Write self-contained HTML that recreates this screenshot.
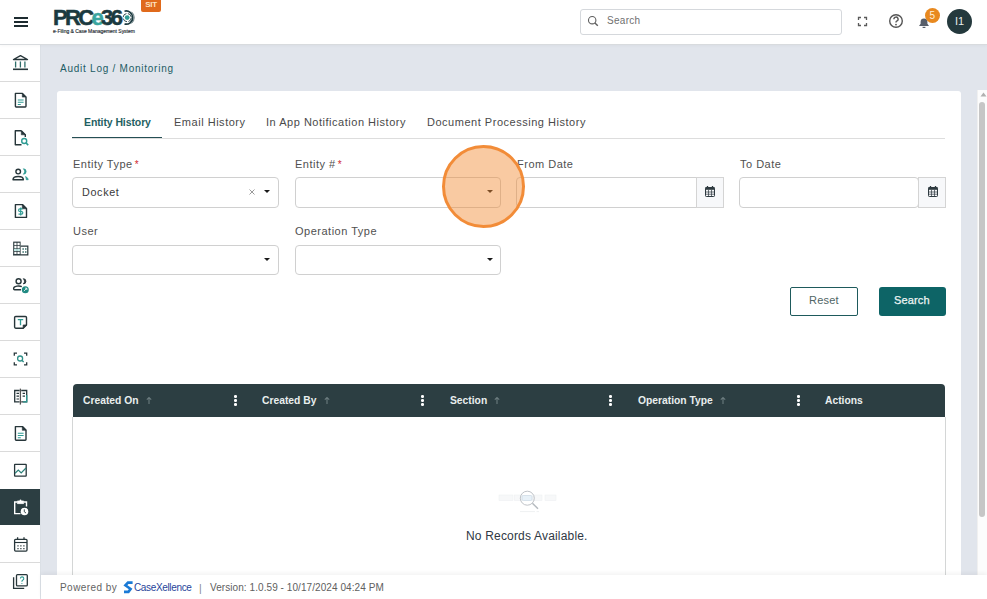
<!DOCTYPE html>
<html><head><meta charset="utf-8">
<style>
*{box-sizing:border-box;margin:0;padding:0}
html,body{width:987px;height:599px;overflow:hidden;background:#e1e5ec;font-family:"Liberation Sans",sans-serif;color:#333}
.abs{position:absolute;white-space:nowrap}
#hdr{position:absolute;left:0;top:0;width:987px;height:45px;background:#fff;border-bottom:1px solid #d8dbde;box-shadow:0 1px 3px rgba(0,0,0,0.035);z-index:2}
#side{position:absolute;left:0;top:45px;width:41px;height:554px;background:#fff;border-right:1px solid #dbe0e6}
.sep{position:absolute;left:0;width:40px;height:1px;background:#dadada}
#card{position:absolute;left:57px;top:91px;width:904px;height:520px;background:#fff;border-radius:3px}
.tab{position:absolute;top:116px;font-size:11px;color:#4a4a4a;letter-spacing:0.52px;line-height:13px}
.lbl{position:absolute;font-size:11px;color:#505050;letter-spacing:0.5px;line-height:13px}
.req{color:#d0282e;margin-left:-1.5px;font-size:10px}
.inp{position:absolute;height:31px;border:1px solid #d0d0d0;border-radius:4px;background:#fff}
.caret{position:absolute;width:0;height:0;border-left:3px solid transparent;border-right:3px solid transparent;border-top:3px solid #1a1a1a}
.cal{position:absolute;width:28px;height:31px;border:1px solid #d4d4d4;background:#f7f8fa}
#thead{position:absolute;left:73px;top:384px;width:872px;height:33px;background:#2c3e42;border-radius:4px 4px 0 0}
.th{position:absolute;top:394px;font-size:10.3px;color:#e9eeee;font-weight:bold;line-height:13px}
.arr{position:absolute;top:395px}
.dots{position:absolute;top:395px;width:2px}
.dots i{display:block;width:2.6px;height:2.6px;background:#fff;border-radius:50%;margin-bottom:1.4px}
#tbody{position:absolute;left:72px;top:417px;width:874px;height:170px;border-left:1px solid #d4d6d6;border-right:1px solid #d4d6d6}
#footer{position:absolute;left:41px;top:575px;width:946px;height:24px;background:#fff;box-shadow:0 -2px 4px rgba(0,0,0,0.05)}
#sbar{position:absolute;left:977px;top:90px;width:10px;height:485px;background:#fcfcfc;border-left:1px solid #f0f0f0}
</style></head><body>
<div id="hdr">
  <!-- hamburger -->
  <div class="abs" style="left:14px;top:17px;width:14px;height:2px;background:#1d2b30"></div>
  <div class="abs" style="left:14px;top:21px;width:14px;height:2px;background:#1d2b30"></div>
  <div class="abs" style="left:14px;top:25px;width:14px;height:2px;background:#1d2b30"></div>
  <!-- logo -->
  <div class="abs" style="left:53px;top:6px;font-size:22px;font-weight:bold;letter-spacing:-2.65px;color:#1b3a40;line-height:24px;-webkit-text-stroke:0.5px #1b3a40">PRC<span style="color:#3aa59f;-webkit-text-stroke:0.5px #3aa59f">e</span>36</div>
  <svg class="abs" style="left:117px;top:7px" width="21" height="21" viewBox="0 0 21 21">
    <circle cx="10.2" cy="10.6" r="2.4" fill="#2f9c94"/>
    <circle cx="10.2" cy="10.6" r="4.1" fill="none" stroke="#1b3a40" stroke-width="0.9" stroke-dasharray="5 1.5"/>
    <path d="M7.5 4.2 A6.6 6.6 0 1 1 7.5 17" fill="none" stroke="#1b3a40" stroke-width="1.7"/>
    <path d="M14.5 4.8 A7.6 7.6 0 0 1 14.5 16.4" fill="none" stroke="#1b3a40" stroke-width="0.7"/>
  </svg>
  <div class="abs" style="left:53px;top:28px;font-size:5px;color:#1f2d32;letter-spacing:-0.03px;line-height:6px;-webkit-text-stroke:0.15px #1f2d32">e-Filing &amp; Case Management System</div>
  <div class="abs" style="left:141px;top:0;width:20px;height:12px;background:#e06a1c;border-radius:0 0 2px 2px;color:#fde3c0;font-size:8px;font-weight:bold;text-align:center;line-height:10px;letter-spacing:-0.3px">SIT</div>
  <!-- search -->
  <div class="abs" style="left:580px;top:9px;width:262px;height:26px;border:1px solid #d5d8dc;border-radius:3px;background:#fff"></div>
  <svg class="abs" style="left:586px;top:14px" width="14" height="14" viewBox="0 0 14 14"><circle cx="6.2" cy="6.2" r="3.7" fill="none" stroke="#5e5e5e" stroke-width="1.1"/><path d="M8.9 8.9 L11.8 11.8" stroke="#5e5e5e" stroke-width="1.4"/></svg>
  <div class="abs" style="left:607px;top:15px;font-size:10px;color:#707070;letter-spacing:0.3px;line-height:12px">Search</div>
  <!-- fullscreen -->
  <svg class="abs" style="left:857px;top:16px" width="11" height="11" viewBox="0 0 11 11" fill="none" stroke="#5a5a5a" stroke-width="1.3">
    <path d="M1.5 4V1.5H4M7 1.5H9.5V4M9.5 7V9.5H7M4 9.5H1.5V7"/>
  </svg>
  <!-- help -->
  <svg class="abs" style="left:888px;top:13px" width="16" height="16" viewBox="0 0 16 16">
    <circle cx="8" cy="8" r="6.3" fill="none" stroke="#555" stroke-width="1.4"/>
    <path d="M5.9 6.3 A2.1 2.1 0 1 1 8.6 8.2 Q8 8.5 8 9.6" fill="none" stroke="#555" stroke-width="1.4"/>
    <circle cx="8" cy="11.6" r="0.9" fill="#555"/>
  </svg>
  <!-- bell -->
  <svg class="abs" style="left:917px;top:15px" width="14" height="14" viewBox="0 0 14 14">
    <path d="M2 11 L3.6 8.8 V6.8 A3.4 3.4 0 0 1 10.4 6.8 V8.8 L12 11 Z" fill="#585f6b"/>
    <path d="M5.6 12.4 H8.4" stroke="#585f6b" stroke-width="1.2"/>
  </svg>
  <div class="abs" style="left:924.5px;top:7.5px;width:15.5px;height:15.5px;border-radius:50%;background:#e8891f;color:#fdf0d8;font-size:10px;text-align:center;line-height:15px">5</div>
  <!-- avatar -->
  <div class="abs" style="left:947px;top:9px;width:25px;height:25px;border-radius:50%;background:#24393d;color:#e8eeee;font-size:11px;text-align:center;line-height:25px">I1</div>
</div>

<div id="side"></div>
<div class="sep" style="top:81px"></div>
<div class="sep" style="top:118px"></div>
<div class="sep" style="top:155px"></div>
<div class="sep" style="top:192px"></div>
<div class="sep" style="top:229px"></div>
<div class="sep" style="top:266px"></div>
<div class="sep" style="top:303px"></div>
<div class="sep" style="top:340px"></div>
<div class="sep" style="top:377px"></div>
<div class="sep" style="top:414px"></div>
<div class="sep" style="top:451px"></div>
<div class="abs" style="left:0;top:489px;width:40px;height:36px;background:#2c3e42"></div>
<div class="sep" style="top:562px"></div>

<svg class="abs" style="left:0;top:0" width="40" height="599" viewBox="0 0 40 599" fill="none" stroke-linecap="butt">
  <g stroke="#27363a" stroke-width="1.4">
    <!-- 0 bank -->
    <path d="M13.5 59.5 L20.5 55.6 L27.5 59.5 Z" stroke-linejoin="round"/>
    <path d="M13 69.3 H28" stroke-width="1.6"/>
    <path d="M15.6 61.5 V67.5 M20.4 61.5 V67.5 M24.9 61.5 V67.5" stroke="#2f6e6a" stroke-width="1.3"/>
    <!-- 1 doc -->
    <path d="M15.4 93.4 H22.5 L26 96.9 V106.3 Q26 107 25.3 107 H16.1 Q15.4 107 15.4 106.3 Z" stroke-linejoin="round"/>
    <path d="M22.3 93.4 L26 97.1 L22.3 97.1 Z" fill="#27363a" stroke-width="0.6"/>
    <path d="M17.8 100 H23.6 M17.8 102.3 H23.6 M17.8 104.5 H20.8" stroke="#2f9c94" stroke-width="1.1"/>
    <!-- 2 doc search -->
    <path d="M21.5 130.8 H15.3 V144.8 H21.5" stroke-linejoin="round"/>
    <path d="M21.3 130.8 L25.3 134.8 V137" />
    <path d="M21.3 130.8 L25.3 134.8 L21.3 134.8 Z" fill="#27363a" stroke-width="0.6"/>
    <circle cx="24.2" cy="141" r="2.5" stroke="#2f9c94" stroke-width="1.4"/>
    <path d="M26 142.9 L28.2 145.1" stroke="#2f9c94" stroke-width="1.5"/>
    <!-- 3 users -->
    <circle cx="18.2" cy="171.6" r="2.3"/>
    <path d="M13 179.7 C13 175.5 23.4 175.5 23.4 179.7 Z" stroke-linejoin="round"/>
    <path d="M23.4 168.8 A2.7 2.7 0 0 1 23.4 174.2 A3.5 3.5 0 0 0 23.4 168.8 Z" fill="#2f9c94" stroke="#2f9c94" stroke-width="0.8"/>
    <path d="M25.6 176.6 Q28.2 177.8 28.2 179.7 H26.3 Q26.3 178 25.6 176.6 Z" fill="#2f9c94" stroke="#2f9c94" stroke-width="0.8"/>
    <!-- 4 $ doc -->
    <path d="M15.4 204.6 H22.5 L26.5 208.6 V217.4 H15.4 Z" stroke-linejoin="round"/>
    <path d="M22.3 204.6 L26.5 208.8 L22.3 208.8 Z" fill="#27363a" stroke-width="0.6"/>
    <path d="M22.6 208.9 H19.7 Q18.6 208.9 18.6 210.3 Q18.6 211.5 19.7 211.5 H21.6 Q22.8 211.5 22.8 212.8 Q22.8 214.1 21.6 214.1 H18.5 M20.7 207.6 V215.4" stroke="#2f9c94" stroke-width="1.2"/>
    <!-- 5 building -->
    <path d="M13.2 254.8 V241.6 H20.6 V254.8 Z" fill="#27363a" stroke="none"/>
    <path d="M20.6 246.2 H27.8 V254.8 H13" stroke-width="1.2"/>
    <path d="M14.3 242.8 h2.3 v2.1 h-2.3z M17.4 242.8 h2.3 v2.1 h-2.3z M14.3 245.8 h2.3 v2.1 h-2.3z M17.4 245.8 h2.3 v2.1 h-2.3z M14.3 248.8 h2.3 v2.1 h-2.3z M17.4 248.8 h2.3 v2.1 h-2.3z M14.3 251.8 h2.3 v2.1 h-2.3z M17.4 251.8 h2.3 v2.1 h-2.3z" fill="#fff" stroke="none"/>
    <path d="M14.3 248.8 h2.3 v2.1 h-2.3z M17.4 248.8 h2.3 v2.1 h-2.3z" fill="#bfeee9" stroke="none"/>
    <path d="M22.4 248.3 h1.5 v1.5 h-1.5z M25 248.3 h1.5 v1.5 h-1.5z M22.4 251.2 h1.5 v1.5 h-1.5z M25 251.2 h1.5 v1.5 h-1.5z" fill="#3b6f6c" stroke="none"/>
    <!-- 6 user badge -->
    <circle cx="18.6" cy="281.2" r="2.5"/>
    <path d="M21.8 286.6 C19.5 285.6 13.6 285.8 13.6 288.6 Q13.6 289.8 14.6 289.8 H21" stroke-linejoin="round"/>
    <path d="M23.3 278.7 A2.6 2.6 0 0 1 23.3 283.9 A3.4 3.4 0 0 0 23.3 278.7 Z" fill="#27363a" stroke-width="0.9"/>
    <circle cx="25.3" cy="289.7" r="3.5" fill="#208a82" stroke="none"/>
    <path d="M23.9 291.1 L26.7 288.3 M25 288.2 H26.8 V290" stroke="#fff" stroke-width="0.8"/>
    <!-- 7 T note -->
    <path d="M15.7 316.5 H25.4 Q26.5 316.5 26.5 317.6 V325 L23.2 328.2 H15.7 Q14.6 328.2 14.6 327.1 V317.6 Q14.6 316.5 15.7 316.5 Z" stroke-linejoin="round"/>
    <path d="M26.5 325 L23.2 328.2 V325 Z" fill="#27363a" stroke-width="0.8"/>
    <path d="M17.8 319.7 H23.2 M20.5 319.7 V325.3" stroke="#2f9c94" stroke-width="1.3"/>
    <!-- 8 scan -->
    <path d="M14.3 355.8 V353.2 H17 M24 353.2 H26.7 V355.8 M26.7 362.2 V364.8 H24 M17 364.8 H14.3 V362.2" stroke-width="1.3"/>
    <circle cx="20.1" cy="358.5" r="2.5" stroke="#2f8f88" stroke-width="1.3"/>
    <path d="M21.9 360.3 L23.6 362" stroke="#2f8f88" stroke-width="1.4"/>
    <!-- 9 book -->
    <path d="M20.4 388.6 V404.6" stroke="#555" stroke-width="1.3"/>
    <path d="M19.6 390.5 H14.7 V401.8 H19.6" stroke-width="1.3"/>
    <path d="M16.5 393.4 H19 M16.5 396.2 H19 M16.5 399 H19" stroke-width="1.2"/>
    <path d="M21.2 390.5 H26.7 V401.8 H21.2" stroke="#27363a" stroke-width="1.3"/>
    <path d="M26.7 395 V401.8 H23" stroke="#2f9c94" stroke-width="1.3"/>
    <path d="M22.6 393.4 H25 M22.6 396.2 H25" stroke="#27363a" stroke-width="1.2"/>
    <!-- 10 doc -->
    <path d="M15.4 426.6 H22.5 L26 430.1 V439.5 Q26 440.2 25.3 440.2 H16.1 Q15.4 440.2 15.4 439.5 Z" stroke-linejoin="round"/>
    <path d="M22.3 426.6 L26 430.3 L22.3 430.3 Z" fill="#27363a" stroke-width="0.6"/>
    <path d="M17.8 433.2 H23.6 M17.8 435.5 H23.6 M17.8 437.7 H20.8" stroke="#2f9c94" stroke-width="1.1"/>
    <!-- 11 chart -->
    <rect x="14.6" y="464.4" width="11.6" height="11.8" rx="0.4" stroke-width="1.3"/>
    <path d="M15 473.2 L18.3 470.1 L21.2 473 L26 468" stroke="#2a7f78" stroke-width="1.2"/>
    <!-- 13 calendar -->
    <rect x="14.6" y="539.3" width="12.4" height="11.8" rx="1" stroke-width="1.3"/>
    <path d="M14.6 542.5 H27" stroke-width="1.1"/>
    <path d="M17.6 537.3 V539.8 M24 537.3 V539.8" stroke-width="1.3"/>
    <path d="M17.4 545.2 h1.2 v1.2 h-1.2z M20.3 545.2 h1.2 v1.2 h-1.2z M23.3 545.2 h1.2 v1.2 h-1.2z M17.4 548 h1.2 v1.2 h-1.2z M20.3 548 h1.2 v1.2 h-1.2z M23.3 548 h1.2 v1.2 h-1.2z" fill="#27363a" stroke="none"/>
    <!-- 14 help stack -->
    <rect x="16.5" y="574.6" width="10.8" height="11.3" rx="1" stroke-width="1.3"/>
    <path d="M13.6 577.3 V588.3 H24.2" stroke-width="1.3"/>
    <path d="M20.4 578.6 A1.7 1.7 0 1 1 22.6 580.2 Q21.9 580.6 21.9 581.8" stroke="#2f9c94" stroke-width="1.1"/>
    <circle cx="21.9" cy="583.5" r="0.6" fill="#2f9c94" stroke="none"/>
  </g>
  <!-- 12 clipboard clock active -->
  <g stroke="#fff" stroke-width="1.4" fill="none">
    <path d="M17 502 H14.7 V513.6 H20.5"/>
    <path d="M24 502 H26.5 V506.5"/>
    <path d="M17.4 501 H23.6 V503.6 H17.4 Z" fill="#fff" stroke-width="0.8"/>
    <circle cx="20.5" cy="500.5" r="0.9" fill="#fff" stroke="none"/>
    <circle cx="24.5" cy="511.5" r="3.8" fill="#fff" stroke="none"/>
    <path d="M24.3 509.3 V511.8 L26 513" stroke="#2c3e42" stroke-width="0.9"/>
  </g>
</svg>

<div class="abs" style="left:60px;top:62.5px;font-size:10px;color:#1d5c64;letter-spacing:0.75px;line-height:12px">Audit Log / Monitoring</div>

<div id="card"></div>
<!-- tabs -->
<div class="tab" style="left:84px;font-weight:bold;color:#1f5f63;letter-spacing:-0.1px;font-size:10.5px">Entity History</div>
<div class="tab" style="left:174px">Email History</div>
<div class="tab" style="left:266px">In App Notification History</div>
<div class="tab" style="left:427px">Document Processing History</div>
<div class="abs" style="left:72px;top:138px;width:873px;height:1px;background:#dddddd"></div>
<div class="abs" style="left:72px;top:136.5px;width:90px;height:1.8px;background:#254f54"></div>

<!-- row 1 -->
<div class="lbl" style="left:73px;top:158px">Entity Type <span class="req">*</span></div>
<div class="inp" style="left:72px;top:177px;width:207px"></div>
<div class="abs" style="left:82px;top:185.5px;font-size:10.8px;color:#3a3a3a;letter-spacing:0.65px;line-height:13px">Docket</div>
<svg class="abs" style="left:248px;top:188px" width="8" height="8" viewBox="0 0 8 8"><path d="M1.5 1.5 L6.5 6.5 M6.5 1.5 L1.5 6.5" stroke="#9a9a9a" stroke-width="1"/></svg>
<div class="caret" style="left:264px;top:190px"></div>

<div class="lbl" style="left:295px;top:158px">Entity # <span class="req">*</span></div>
<div class="inp" style="left:295px;top:177px;width:206px"></div>
<div class="caret" style="left:487px;top:190px"></div>

<div class="lbl" style="left:517px;top:158px">From Date</div>
<div class="inp" style="left:516px;top:177px;width:181px;border-radius:4px 0 0 4px"></div>
<div class="cal" style="left:696px;top:177px"></div>
<div class="lbl" style="left:740px;top:158px">To Date</div>
<div class="inp" style="left:739px;top:177px;width:180px"></div>
<div class="cal" style="left:918px;top:177px"></div>
<svg class="abs" style="left:704px;top:185px" width="12" height="12" viewBox="0 0 12 12"><rect x="1.5" y="2.5" width="9" height="9" rx="0.8" fill="none" stroke="#2e3a40" stroke-width="1"/><rect x="1.5" y="2.2" width="9" height="2.6" fill="#2e3a40"/><path d="M4.5 4.8v6.5M7.5 4.8v6.5M1.5 7h9M1.5 9.2h9" stroke="#2e3a40" stroke-width="0.7"/><path d="M3.5 1v2M8.5 1v2" stroke="#2e3a40" stroke-width="1.3"/></svg>
<svg class="abs" style="left:927px;top:185px" width="12" height="12" viewBox="0 0 12 12"><rect x="1.5" y="2.5" width="9" height="9" rx="0.8" fill="none" stroke="#2e3a40" stroke-width="1"/><rect x="1.5" y="2.2" width="9" height="2.6" fill="#2e3a40"/><path d="M4.5 4.8v6.5M7.5 4.8v6.5M1.5 7h9M1.5 9.2h9" stroke="#2e3a40" stroke-width="0.7"/><path d="M3.5 1v2M8.5 1v2" stroke="#2e3a40" stroke-width="1.3"/></svg>

<!-- row 2 -->
<div class="lbl" style="left:73px;top:225px">User</div>
<div class="inp" style="left:72px;top:245px;width:207px;height:30px"></div>
<div class="caret" style="left:264px;top:258px"></div>
<div class="lbl" style="left:295px;top:225px">Operation Type</div>
<div class="inp" style="left:295px;top:245px;width:206px;height:30px"></div>
<div class="caret" style="left:487px;top:258px"></div>

<!-- buttons -->
<div class="abs" style="left:790px;top:287px;width:68px;height:29px;border:1px solid #1e5a5c;border-radius:2px;background:#fff"></div>
<div class="abs" style="left:809px;top:294px;font-size:11px;color:#4f6565;letter-spacing:0.2px;line-height:13px">Reset</div>
<div class="abs" style="left:879px;top:287px;width:67px;height:29px;border-radius:3px;background:#0d6466"></div>
<div class="abs" style="left:894px;top:294px;font-size:11px;color:#eef4f4;letter-spacing:0.15px;line-height:13px;-webkit-text-stroke:0.25px #eef4f4">Search</div>

<!-- table -->
<div id="thead"></div>
<div id="tbody"></div>
<div class="th" style="left:83px">Created On</div>
<div class="th" style="left:262px">Created By</div>
<div class="th" style="left:450px">Section</div>
<div class="th" style="left:638px">Operation Type</div>
<div class="th" style="left:825px">Actions</div>
<svg class="abs arr" style="left:145px" width="8" height="10" viewBox="0 0 8 10"><path d="M4 9 V2.5 M1.8 4.7 L4 2.5 L6.2 4.7" stroke="#6b7b7e" stroke-width="1.1" fill="none"/></svg>
<svg class="abs arr" style="left:323px" width="8" height="10" viewBox="0 0 8 10"><path d="M4 9 V2.5 M1.8 4.7 L4 2.5 L6.2 4.7" stroke="#6b7b7e" stroke-width="1.1" fill="none"/></svg>
<svg class="abs arr" style="left:493px" width="8" height="10" viewBox="0 0 8 10"><path d="M4 9 V2.5 M1.8 4.7 L4 2.5 L6.2 4.7" stroke="#6b7b7e" stroke-width="1.1" fill="none"/></svg>
<svg class="abs arr" style="left:719px" width="8" height="10" viewBox="0 0 8 10"><path d="M4 9 V2.5 M1.8 4.7 L4 2.5 L6.2 4.7" stroke="#6b7b7e" stroke-width="1.1" fill="none"/></svg>
<div class="dots" style="left:234px"><i></i><i></i><i></i></div>
<div class="dots" style="left:421px"><i></i><i></i><i></i></div>
<div class="dots" style="left:609px"><i></i><i></i><i></i></div>
<div class="dots" style="left:797px"><i></i><i></i><i></i></div>

<!-- empty state -->
<svg class="abs" style="left:496px;top:488px" width="64" height="26" viewBox="0 0 64 26">
  <g fill="#f7f8f9" stroke="#eef0f2" stroke-width="0.6">
    <rect x="3" y="7" width="14" height="5.5"/><rect x="18.5" y="7" width="8" height="5.5"/><rect x="36" y="7" width="10" height="5.5"/><rect x="49" y="7" width="11" height="5.5"/>
  </g>
  <rect x="26" y="7.5" width="10" height="5" rx="1.2" fill="#e8f1f8" stroke="#c5d3e0" stroke-width="0.6"/>
  <circle cx="31.3" cy="10.2" r="7" fill="none" stroke="#bfc3c8" stroke-width="1"/>
  <path d="M36.4 15.3 L42 20.8" stroke="#b5babf" stroke-width="1.5"/>
  <path d="M24 23.6 H39 M40.5 23.6 H43" stroke="#e3e5e8" stroke-width="0.6"/>
</svg>
<div class="abs" style="left:466px;top:529px;font-size:12px;color:#2f3844;letter-spacing:0.18px;line-height:14px">No Records Available.</div>

<div id="sbar">
  <svg class="abs" style="left:1px;top:1px" width="9" height="7" viewBox="0 0 9 7"><path d="M1.5 5.5 L4.5 1.5 L7.5 5.5 Z" fill="#b0b0b0"/></svg>
  <div class="abs" style="left:1px;top:12px;width:6px;height:415px;background:#c6c6c6;border-radius:3px"></div>
</div>

<div id="footer"></div>
<div class="abs" style="left:60px;top:582px;font-size:10px;color:#636363;letter-spacing:0.45px;line-height:12px">Powered by</div>
<svg class="abs" style="left:123px;top:581px" width="11" height="13" viewBox="0 0 11 13"><path d="M9.6 1.6 H5 L2.4 4.4 L7.6 8 L5.4 10.9 H1" fill="none" stroke="#1a7ad6" stroke-width="2.6" stroke-linejoin="miter" stroke-miterlimit="3"/></svg>
<div class="abs" style="left:134px;top:582px;font-size:10px;color:#27449a;letter-spacing:-0.35px;line-height:12px">CaseXellence</div>
<div class="abs" style="left:199px;top:582px;font-size:10.5px;color:#888;line-height:12px">|</div>
<div class="abs" style="left:210px;top:582px;font-size:10px;color:#606060;letter-spacing:0.07px;line-height:12px">Version: 1.0.59 - 10/17/2024 04:24 PM</div>

<!-- click indicator -->
<div class="abs" style="left:442px;top:145px;width:83px;height:83px;border-radius:50%;border:3.4px solid #f28c38;background:rgba(243,140,52,0.46)"></div>
</body></html>
